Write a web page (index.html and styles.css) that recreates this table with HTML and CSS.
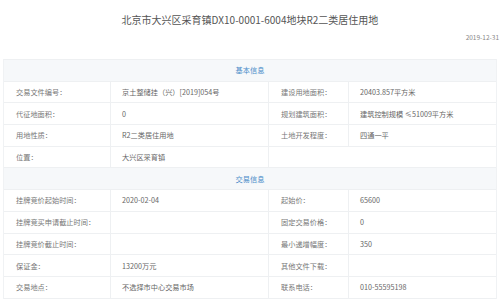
FILE: index.html
```html
<!DOCTYPE html>
<html lang="zh">
<head>
<meta charset="utf-8">
<title>地块详情</title>
<link rel="stylesheet" href="styles.css">
</head>
<body>
<div class="page">
  <h1 class="title">北京市大兴区采育镇DX10-0001-6004地块R2二类居住用地</h1>
  <div class="date">2019-12-31</div>
  <div class="info">
    <div class="sec">基本信息</div>
    <div class="lbl">交易文件编号：</div><div class="val">京土整储挂（兴）[2019]054号</div>
    <div class="lbl lbl2">建设用地面积：</div><div class="val last">20403.857平方米</div>

    <div class="lbl">代征地面积：</div><div class="val">0</div>
    <div class="lbl lbl2">规划建筑面积：</div><div class="val last">建筑控制规模 ≤51009平方米</div>

    <div class="lbl">用地性质：</div><div class="val">R2二类居住用地</div>
    <div class="lbl lbl2">土地开发程度：</div><div class="val last">四通一平</div>

    <div class="lbl">位置：</div><div class="val">大兴区采育镇</div>
    <div class="val span2 last"></div>

    <div class="sec">交易信息</div>
    <div class="lbl">挂牌竞价起始时间：</div><div class="val">2020-02-04</div>
    <div class="lbl lbl2">起始价：</div><div class="val last">65600</div>

    <div class="lbl">挂牌竞买申请截止时间：</div><div class="val"></div>
    <div class="lbl lbl2">固定交易价格：</div><div class="val last">0</div>

    <div class="lbl">挂牌竞价截止时间：</div><div class="val"></div>
    <div class="lbl lbl2">最小递增幅度：</div><div class="val last">350</div>

    <div class="lbl">保证金：</div><div class="val">13200万元</div>
    <div class="lbl lbl2">其他文件下载：</div><div class="val last"></div>

    <div class="lbl">交易地点：</div><div class="val">不选择市中心交易市场</div>
    <div class="lbl lbl2">联系电话：</div><div class="val last">010-55595198</div>
  </div>
</div>
</body>
</html>
```
FILE: styles.css
```css
html, body {
  margin: 0;
  padding: 0;
  background: #ffffff;
}
body {
  font-family: "Noto Sans CJK SC", "Noto Sans", sans-serif;
}
.page {
  padding: 0 3px;
}
.title {
  margin: 0;
  padding-top: 13px;
  font-size: 10px;
  line-height: 14px;
  font-weight: normal;
  text-align: center;
  color: #555555;
}
.date {
  margin-top: 6px;
  margin-right: -2px;
  font-size: 6.5px;
  line-height: 8px;
  text-align: right;
  color: #888888;
}
.info {
  margin-top: 18px;
  display: grid;
  grid-template-columns: 107px 158px 80px 1fr;
  grid-auto-rows: 21.7px;
  border-top: 1px solid #eef0f2;
  border-left: 1px solid #f0f2f4;
  border-right: 1px solid #f0f2f4;
  font-size: 7.2px;
}
.sec {
  grid-column: 1 / span 4;
  display: flex;
  align-items: center;
  justify-content: center;
  background: #f6f8fa;
  color: #4a8cc9;
  border-bottom: 1px solid #eef0f2;
}
.lbl, .val {
  box-sizing: border-box;
  display: flex;
  align-items: center;
  padding-left: 12px;
  border-bottom: 1px solid #eef0f2;
  border-right: 1px solid #eef0f2;
  white-space: nowrap;
}
.lbl {
  color: #777777;
}
.val {
  padding-left: 11px;
  color: #666666;
}
.val.last {
  border-right: none;
}
.span2 {
  grid-column: span 2;
}
```
